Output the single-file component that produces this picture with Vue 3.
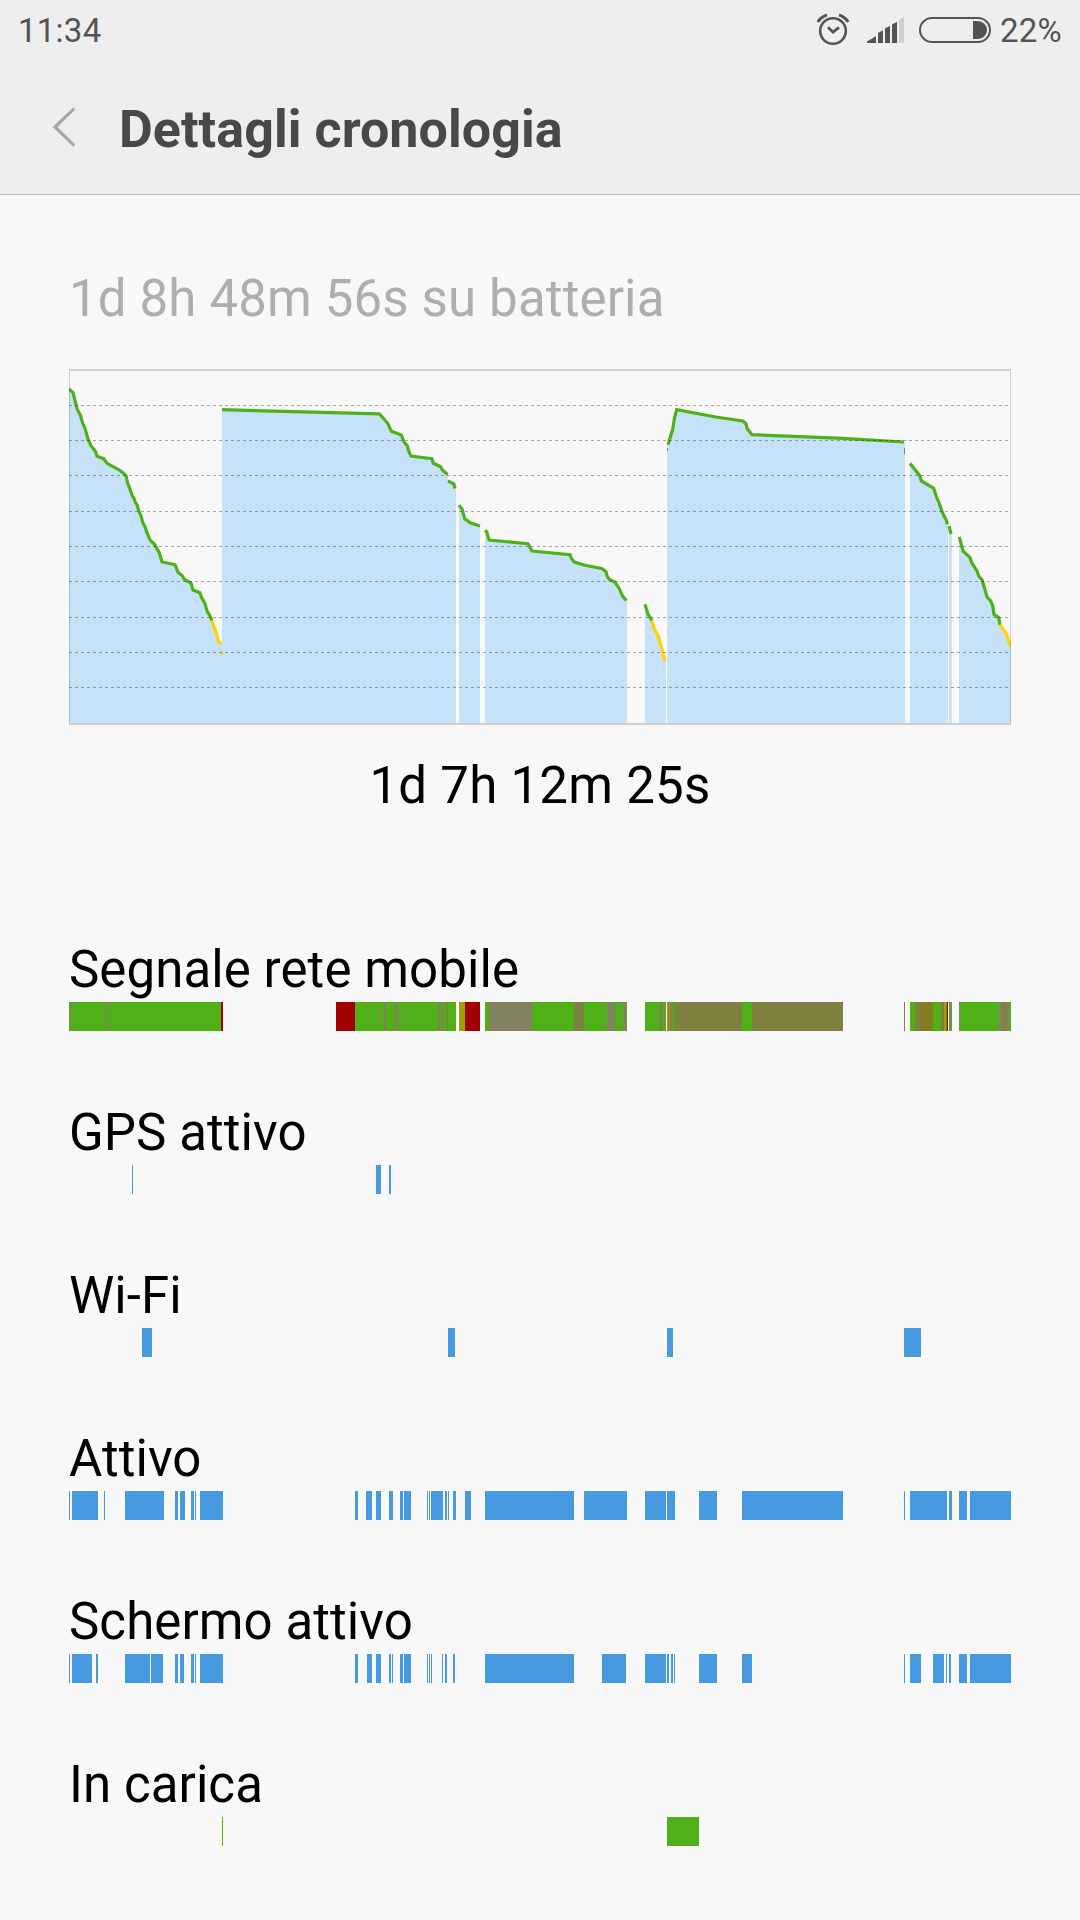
<script setup>
import { ref, computed } from 'vue'

const time = ref('11:34')
const batteryLevel = ref('22%')

const chartBottom = 354

// every line belongs to the filled area below it
const segments = [
  {
    end: 153,
    green: [[0, 20], [4, 23.7], [6, 31.7], [8, 39.7], [11.3, 46], [13.7, 54.3], [16, 59.3], [19, 70.3], [22, 76.7], [26.7, 82.7], [28, 87.3], [34.7, 89.7], [38, 94.3], [50.3, 101], [54.3, 104], [57, 106.7], [58.7, 114.3], [60.7, 119], [63, 126.3], [64.7, 128.7], [66.3, 133.3], [68, 135.7], [70.3, 143.7], [71.7, 146], [74, 154.3], [75.7, 157], [78.3, 164.7], [81.3, 171.3], [85.3, 175], [90.3, 184], [93, 193], [106, 195.7], [109, 203.3], [113.3, 206.7], [115.3, 210.3], [122, 214], [124, 221], [131, 223.7], [132.3, 228], [135.7, 234], [138.3, 242.7], [140.3, 245.7], [143, 251.7]],
    yellow: [[143, 251.7], [145, 258.3], [147, 263], [150, 274], [153, 274]],
  },
  {
    end: 379,
    green: [[153, 40.7], [310.3, 44.8], [318.7, 54.3], [322.3, 62.3], [332.3, 66], [335, 73], [338, 76.3], [340, 83], [342, 87], [363, 89.7], [364.3, 94.3], [371.7, 97.7], [373.3, 101], [378.6, 105.5]],
  },
  { end: 387, green: [[379, 112], [385, 115], [386, 119.7]] },
  { end: 411, green: [[390, 136.3], [393, 140], [395.7, 149.7], [401.3, 153.7], [411, 157]] },
  {
    end: 558,
    green: [[416, 161.3], [417.7, 162.7], [420, 171], [459, 174.7], [463, 182], [501, 185.7], [502.3, 189.3], [505.3, 193], [516, 196.3], [533.3, 199.7], [537, 202.7], [538, 207], [540.3, 210.3], [546, 213.3], [550.3, 219.7], [553.7, 227.3], [557.5, 231.5]],
  },
  {
    end: 597,
    green: [[576, 235.3], [579, 245.3], [583, 251.7]],
    yellow: [[583, 251.7], [584.7, 258.3], [590, 269.3], [593, 280.3], [596, 292]],
  },
  {
    start: 598,
    end: 836,
    green: [[599, 75.7], [603.7, 60.3], [605.3, 50], [607.7, 40.7], [646.7, 48], [673.7, 52], [677, 54.7], [678, 59.3], [683, 65.7], [774.3, 69.3], [835, 73]],
  },
  {
    end: 879,
    green: [[841, 94.3], [851, 107], [852.3, 112], [864.7, 119.3], [867.7, 128.7], [870, 133.7], [873, 142.3], [875.3, 147.7], [877.3, 151], [878.3, 155.3]],
  },
  { end: 883, green: [[880, 157], [882, 165]] },
  {
    end: 942,
    green: [[890.3, 168], [894, 182], [901, 188.7], [902.7, 193.7], [908, 202], [909.7, 207], [913, 210.7], [915, 217.3], [918, 228], [921.3, 231.3], [923.7, 236.7], [925, 245.3], [929.7, 248.7], [931, 256]],
    yellow: [[931, 256], [937.7, 265.3], [940, 273.3], [942, 277.5]],
  },
]

const gridLines = [36.5, 71.5, 106.5, 142.5, 177.5, 212.5, 248.5, 283.5, 318.5]

const toPoints = (points) => points.map((p) => p.join(',')).join(' ')

const areas = computed(() =>
  segments.map((s) => {
    const line = s.yellow ? [...s.green, ...s.yellow] : s.green
    const start = Math.floor(s.start ?? line[0][0])
    const first = [start, line[0][1]]
    const last = [s.end, line[line.length - 1][1]]
    return toPoints([[start, chartBottom], first, ...line, last, [s.end, chartBottom]])
  })
)

// signal strength colors
const G = '#50b018'
const S = '#828162'
const O = '#808040'
const D = '#80801e'
const Y = '#a0a000'
const R = '#a00000'
const B = '#4799e0'

const paint = (color, list) => list.map(([from, to]) => [from, to, color])

const rows = ref([
  {
    label: 'Segnale rete mobile',
    bars: [
      [0, 2, G], [2, 3, S], [3, 36, G], [36, 37, S], [37, 39, G], [39, 40, S], [40, 152, G], [152, 154, R],
      [267, 286, R], [286, 310, G], [310, 311, S], [311, 315, G], [315, 317, S], [317, 326, G], [326, 329, S],
      [329, 333, G], [333, 334, S], [334, 369, G], [369, 372, S], [372, 374, G], [374, 375, O], [375, 377, G],
      [377, 379, O], [379, 387, G], [390, 396, Y], [396, 411, R], [416, 420, G], [420, 463, S], [463, 505, G],
      [505, 515, O], [515, 538, G], [538, 546, S], [546, 554, G], [554, 557, S], [557, 558, G], [576, 590, G],
      [590, 591, S], [591, 593, O], [593, 596, G], [596, 597, S], [598, 599, Y], [599, 600, O], [600, 601, Y],
      [601, 602, O], [602, 603, S], [603, 604, G], [604, 605, O], [605, 606, G], [606, 673, O], [673, 683, G],
      [683, 774, O], [835, 836, O], [841, 846, G], [846, 851, O], [851, 864, D], [864, 872, G], [872, 874, O],
      [874, 875, D], [875, 877, Y], [877, 878, O], [878, 879, R], [880, 882, S], [882, 883, G], [890, 891, S],
      [891, 930, G], [930, 933, S], [933, 938, O], [938, 940, S], [940, 942, G],
    ],
  },
  {
    label: 'GPS attivo',
    bars: paint(B, [[63, 64], [307, 312], [320, 322]]),
  },
  {
    label: 'Wi-Fi',
    bars: paint(B, [[73, 83], [379, 386], [598, 604], [835, 852]]),
  },
  {
    label: 'Attivo',
    bars: paint(B, [
      [0, 1], [3, 29], [35, 36], [56, 95], [106, 109], [111, 116], [122, 125], [126, 127], [131, 154],
      [286, 289], [297, 303], [307, 312], [320, 324], [331, 334], [335, 342], [358, 359], [360, 361],
      [362, 374], [376, 378], [379, 380], [384, 387], [396, 402], [416, 505], [515, 558], [576, 597],
      [598, 606], [630, 648], [673, 774], [835, 836], [841, 878], [880, 883], [890, 898], [901, 942],
    ]),
  },
  {
    label: 'Schermo attivo',
    bars: paint(B, [
      [0, 1], [3, 23], [27, 29], [56, 81], [82, 94], [106, 109], [111, 115], [122, 125], [126, 127],
      [131, 154], [286, 289], [298, 303], [307, 312], [320, 322], [323, 324], [331, 334], [335, 342],
      [358, 359], [360, 361], [362, 363], [373, 374], [376, 378], [384, 386], [416, 505], [533, 557],
      [576, 597], [598, 600], [602, 604], [605, 606], [630, 648], [673, 683], [835, 836], [841, 852],
      [864, 875], [877, 878], [880, 882], [890, 898], [901, 942],
    ]),
  },
  {
    label: 'In carica',
    bars: paint(G, [[153, 154], [598, 630]]),
  },
])
</script>

<template>
  <div class="screen">
    <header class="top">
      <div class="status-bar">
        <span class="status-text">{{ time }}</span>
        <div class="status-icons">
          <svg class="alarm" width="34" height="34" viewBox="0 0 34 34" fill="none" stroke="#545454">
            <circle cx="17" cy="18" r="12.8" stroke-width="2.6" />
            <path d="M12 14.3L17 19.2L23 14.3" stroke-width="2.8" />
            <path d="M1.8 9Q4.5 4 11 1.8M32.2 9Q29.5 4 23 1.8" stroke-width="3" />
          </svg>
          <svg class="signal" width="37" height="26" viewBox="0 0 37 26" fill="#545454">
            <path d="M0 26V24.5L9 19V26Z" />
            <path d="M11 16L16 13.3V26H11Z" />
            <path d="M18 11.5L23 8.7V26H18Z" />
            <path d="M25 7.5L30 4.7V26H25Z" />
            <path d="M32 2.5L37 0V26H32Z" fill="#d0d0d0" />
          </svg>
          <svg class="battery" width="72" height="26" viewBox="0 0 72 26">
            <rect x="1" y="1" width="70" height="24" rx="12" fill="none" stroke="#545454" stroke-width="2" />
            <path d="M54 4H59A9 9 0 0 1 59 22H54Z" fill="#545454" />
          </svg>
          <span class="status-text">{{ batteryLevel }}</span>
        </div>
      </div>
      <div class="title-bar">
        <svg class="back" width="24" height="40" viewBox="0 0 24 40" fill="none">
          <path d="M21.3 2.4L2.9 20L21.3 37.6" stroke="#a6a6a6" stroke-width="3.2" stroke-linecap="round" />
        </svg>
        <h1>Dettagli cronologia</h1>
      </div>
    </header>

    <main class="content">
      <p class="on-battery">1d 8h 48m 56s su batteria</p>

      <svg class="chart" width="942" height="356" viewBox="0 0 942 356" fill="none">
        <polygon
          v-for="(area, index) in areas"
          :key="'area' + index"
          :points="area"
          fill="#c6e2f8"
          shape-rendering="crispEdges"
        />
        <g v-for="(segment, index) in segments" :key="'line' + index" stroke-width="3.2">
          <polyline :points="toPoints(segment.green)" stroke="#50b018" />
          <polyline v-if="segment.yellow" :points="toPoints(segment.yellow)" stroke="#ffd200" />
        </g>
        <rect x="152" y="282" width="2" height="4" fill="#ffd200" />
        <rect x="598" y="79" width="1" height="3" fill="#50b018" />
        <rect x="835" y="79" width="1" height="6" fill="#50b018" />
        <line
          v-for="y in gridLines"
          :key="y"
          x1="0"
          x2="941"
          :y1="y"
          :y2="y"
          stroke="#000"
          stroke-opacity="0.33"
          stroke-dasharray="3 3"
        />
        <g fill="#000" fill-opacity="0.16">
          <rect width="942" height="2" />
          <rect y="354" width="942" height="2" />
          <rect y="2" width="1" height="352" />
          <rect x="941" y="2" width="1" height="352" />
        </g>
      </svg>

      <p class="duration">1d 7h 12m 25s</p>

      <section class="row" v-for="row in rows" :key="row.label">
        <h2>{{ row.label }}</h2>
        <svg width="942" height="29" viewBox="0 0 942 29" shape-rendering="crispEdges">
          <rect
            v-for="(bar, index) in row.bars"
            :key="index"
            :x="bar[0]"
            :width="bar[1] - bar[0]"
            height="29"
            :fill="bar[2]"
          />
        </svg>
      </section>
    </main>
  </div>
</template>

<style>
body {
  margin: 0;
  background-color: #f8f8f8;
}
</style>

<style scoped>
.screen {
  width: 1080px;
  height: 1920px;
  overflow: hidden;
  background-color: #f8f8f8;
  font-family: Roboto, 'Noto Sans', sans-serif;
  color: #000;
}

.screen svg {
  display: block;
  flex-shrink: 0;
}

.top {
  box-sizing: border-box;
  height: 195px;
  background-color: #eee;
  border-bottom: 1px solid #bcbcbc;
}

.status-bar {
  display: flex;
  align-items: center;
  justify-content: space-between;
  height: 60px;
  padding: 0 18px;
}

.status-text {
  padding-top: 2px;
  color: #545454;
  font-size: 33px;
  line-height: 60px;
  letter-spacing: 0.25px;
}

.status-icons {
  display: flex;
  align-items: center;
}

.signal {
  margin-left: 17px;
}

.battery {
  margin: 0 9px 0 15px;
}

.title-bar {
  display: flex;
  align-items: center;
  height: 134px;
  padding-left: 52px;
}

h1 {
  margin: 5px 0 0 43px;
  color: #484848;
  font-size: 52px;
  font-weight: 700;
  line-height: 60px;
  letter-spacing: 0.05px;
}

.content {
  padding: 74px 69px 0;
}

.on-battery,
.duration {
  margin: 0;
  font-size: 51px;
  line-height: 60px;
}

.on-battery {
  margin-bottom: 40px;
  color: #aeaeae;
  letter-spacing: 0.15px;
}

.duration {
  margin: 31px 0 124px;
  text-align: center;
  letter-spacing: 0.25px;
}

.row {
  height: 163px;
}

.row h2 {
  margin: 0 0 2px;
  font-size: 51px;
  font-weight: 400;
  line-height: 60px;
  letter-spacing: 0.08px;
}
</style>
